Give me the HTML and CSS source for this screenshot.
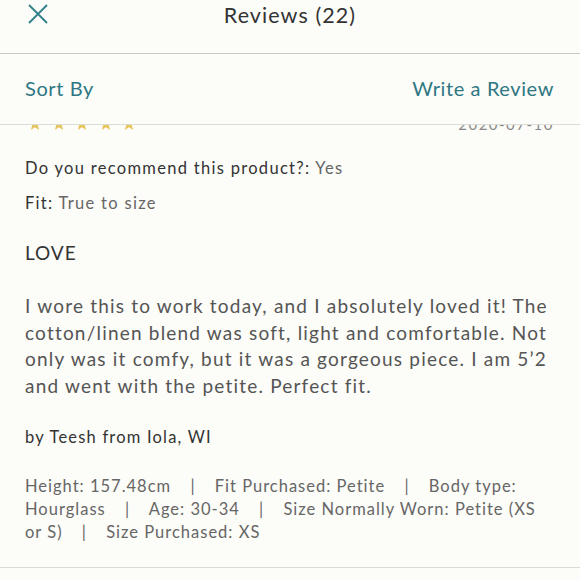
FILE: index.html
```html
<!DOCTYPE html>
<html>
<head>
<meta charset="utf-8">
<link rel="stylesheet" href="styles.css">
</head>
<body>
<div class="app">
  <header class="topbar">
    <div class="close">
      <svg width="22" height="22" viewBox="0 0 22 22"><path d="M2 2 L20 20 M20 2 L2 20" stroke="#2f7f8a" stroke-width="1.8" fill="none"/></svg>
    </div>
    <h1 class="title">Reviews (22)</h1>
  </header>
  <nav class="actions">
    <span class="link">Sort By</span>
    <span class="link">Write a Review</span>
  </nav>
  <main class="scroller">
    <div class="review">
      <div class="meta-row">
        <div class="stars">
          <svg viewBox="0 0 24 24" class="star"><path d="M12 2 L14.6 9 L22 9.3 L16.2 13.9 L18.2 21 L12 16.9 L5.8 21 L7.8 13.9 L2 9.3 L9.4 9 Z"/></svg>
          <svg viewBox="0 0 24 24" class="star"><path d="M12 2 L14.6 9 L22 9.3 L16.2 13.9 L18.2 21 L12 16.9 L5.8 21 L7.8 13.9 L2 9.3 L9.4 9 Z"/></svg>
          <svg viewBox="0 0 24 24" class="star"><path d="M12 2 L14.6 9 L22 9.3 L16.2 13.9 L18.2 21 L12 16.9 L5.8 21 L7.8 13.9 L2 9.3 L9.4 9 Z"/></svg>
          <svg viewBox="0 0 24 24" class="star"><path d="M12 2 L14.6 9 L22 9.3 L16.2 13.9 L18.2 21 L12 16.9 L5.8 21 L7.8 13.9 L2 9.3 L9.4 9 Z"/></svg>
          <svg viewBox="0 0 24 24" class="star"><path d="M12 2 L14.6 9 L22 9.3 L16.2 13.9 L18.2 21 L12 16.9 L5.8 21 L7.8 13.9 L2 9.3 L9.4 9 Z"/></svg>
        </div>
        <span class="date">2020-07-10</span>
      </div>
      <p class="qa"><span class="label">Do you recommend this product?:</span> <span class="val">Yes</span></p>
      <p class="qa fit"><span class="label">Fit:</span> <span class="val">True to size</span></p>
      <h2 class="headline">LOVE</h2>
      <p class="body">I wore this to work today, and I absolutely loved it! The cotton/linen blend was soft, light and comfortable. Not only was it comfy, but it was a gorgeous piece. I am 5’2 and went with the petite. Perfect fit.</p>
      <p class="author">by Teesh from Iola, WI</p>
      <p class="attrs">Height: 157.48cm <span class="sep">|</span> Fit Purchased: Petite <span class="sep">|</span> Body type: Hourglass <span class="sep">|</span> Age: 30-34 <span class="sep">|</span> Size Normally Worn: Petite (XS or S) <span class="sep">|</span> Size Purchased: XS</p>
    </div>
  </main>
</div>
</body>
</html>
```
FILE: styles.css
```css
* { box-sizing: border-box; }
html, body { margin: 0; padding: 0; }
body {
  background: #fcfcf8;
  font-family: Lato, "Noto Sans", sans-serif;
  color: #3a3a3a;
  width: 580px;
  height: 580px;
  overflow: hidden;
}
.app { display: flex; flex-direction: column; height: 580px; }
.topbar {
  height: 54px;
  display: flex;
  align-items: flex-start;
  padding: 3px 0 0 27px;
  border-bottom: 1px solid #c9c9c6;
}
.close { width: 22px; height: 22px; }
.close svg { display: block; }
.title {
  flex: 1;
  margin: 0;
  text-align: center;
  font-size: 21.5px;
  font-weight: 400;
  letter-spacing: 0.05em;
  color: #333;
  line-height: 24px;
  padding-right: 49px;
}
.actions {
  height: 71px;
  display: flex;
  justify-content: space-between;
  align-items: center;
  padding: 0 26px 2px 25px;
  border-bottom: 1px solid #dcdcd8;
}
.link {
  color: #2e7783;
  font-size: 20px;
  letter-spacing: 0.03em;
}
.scroller { flex: 1; overflow: hidden; border-bottom: 1px solid #dcdcd6; margin-bottom: 12px; }
.review { padding: 0 20px 0 25px; margin-top: -8px; }
.meta-row { display: flex; justify-content: space-between; align-items: center; height: 14px; padding-right: 6px; }
.stars { display: flex; gap: 7.5px; padding-left: 2px; }
.star { width: 16px; height: 16px; fill: #e8c45c; flex: none; }
.date { color: #8a8a8a; font-size: 15px; letter-spacing: 0.1em; }
p, h2 { margin: 0; }
.qa { font-size: 16.5px; letter-spacing: 1.3px; line-height: 22px; margin-top: 26px; }
.qa.fit { margin-top: 13px; }
.label { color: #333; }
.val { color: #666; }
.headline { font-size: 19px; font-weight: 400; letter-spacing: 0.05em; color: #333; margin-top: 27px; line-height: 24px; }
.body { font-size: 19px; line-height: 26.7px; color: #555; letter-spacing: 1.2px; margin-top: 28px; }
.author { font-size: 16.5px; letter-spacing: 1.2px; color: #333; margin-top: 26px; line-height: 22px; }
.attrs { font-size: 16.5px; line-height: 23px; color: #666; letter-spacing: 1px; margin-top: 27px; margin-right: 14px; }
.sep { margin: 0 14px; }
```
